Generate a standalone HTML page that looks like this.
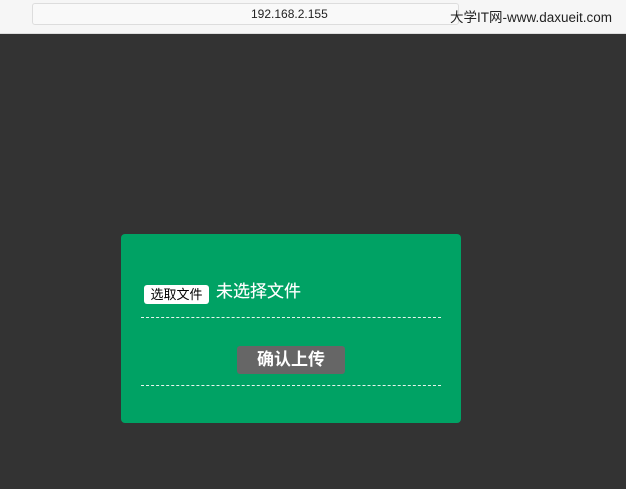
<!DOCTYPE html>
<html><head><meta charset="utf-8"><style>
body{margin:0;width:626px;height:489px;background:#333;font-family:"Liberation Sans","Noto Sans CJK SC",sans-serif;position:relative;overflow:hidden}
.top{position:absolute;left:0;top:0;width:626px;height:33px;background:#f6f6f6;border-bottom:1px solid #ddd}
.addr{position:absolute;left:32px;top:3px;width:425px;height:20px;border:1px solid #ddd;border-radius:3px;background:#f9f9f9;font-size:12px;line-height:21px;color:#222}
.card{position:absolute;left:121px;top:234px;width:340px;height:189px;background:#00a264;border-radius:4px}
.fbtn{position:absolute;left:23px;top:51px;width:65px;height:19px;background:#fff;border-radius:3px;font-size:13px;line-height:19px;text-align:center;color:#000}
.ftxt{position:absolute;left:95px;top:48px;font-size:17px;color:#fff;line-height:20px;text-shadow:0 0 0.4px #fff}
.line{position:absolute;left:20px;width:300px;border-top:1px dashed #e8f6ee}
.ok{position:absolute;left:116px;top:112px;width:108px;height:28px;background:#666;border-radius:3px;color:#fff;font-size:17px;font-weight:bold;text-align:center;line-height:28px}
</style></head><body>
<div class="top"><div class="addr"><span style="position:absolute;left:218px">192.168.2.155</span></div>
<div style="position:absolute;left:450px;top:6px;font-size:13.5px;color:#222">大学IT网-www.daxueit.com</div></div>
<div class="card">
<div class="fbtn">选取文件</div><div class="ftxt">未选择文件</div>
<div class="line" style="top:83px"></div>
<div class="ok">确认上传</div>
<div class="line" style="top:151px"></div>
</div>
</body></html>
